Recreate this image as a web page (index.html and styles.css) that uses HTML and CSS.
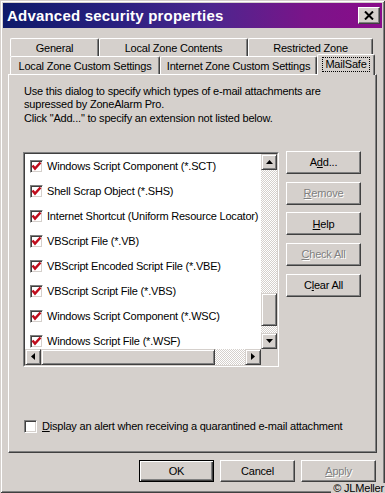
FILE: index.html
```html
<!DOCTYPE html>
<html>
<head>
<meta charset="utf-8">
<title>Advanced security properties</title>
<link rel="stylesheet" href="styles.css">
</head>
<body>
<div class="window">
  <div class="titlebar">
    <span class="title">Advanced security properties</span>
    <div class="close">
      <svg width="10" height="9" viewBox="0 0 10 9"><path d="M1 0.5 L9 8.5 M9 0.5 L1 8.5" stroke="#000" stroke-width="2"/></svg>
    </div>
  </div>
  <div class="client">
    <div class="tabrow">
      <div class="tab w-general">General</div>
      <div class="tab w-lzc">Local Zone Contents</div>
      <div class="tab w-rz">Restricted Zone</div>
    </div>
    <div class="tabrow">
      <div class="tab w-lzcs">Local Zone Custom Settings</div>
      <div class="tab w-izcs">Internet Zone Custom Settings</div>
      <div class="tab sel"><span class="focus">MailSafe</span></div>
    </div>
    <div class="panel">
      <p class="desc">Use this dialog to specify which types of e-mail attachments are<br>supressed by ZoneAlarm Pro.<br>Click "Add..." to specify an extension not listed below.</p>
      <div class="listrow">
        <div class="listbox">
          <div class="listinner">
            <div class="items">
              <div class="item"><span class="cb checked"><svg width="11" height="11" viewBox="0 0 11 11"><path d="M1.5 4.5 L4 7.5 L9.5 1.5" fill="none" stroke="#c00c1c" stroke-width="2.5"/></svg></span>Windows Script Component (*.SCT)</div>
              <div class="item"><span class="cb checked"><svg width="11" height="11" viewBox="0 0 11 11"><path d="M1.5 4.5 L4 7.5 L9.5 1.5" fill="none" stroke="#c00c1c" stroke-width="2.5"/></svg></span>Shell Scrap Object (*.SHS)</div>
              <div class="item"><span class="cb checked"><svg width="11" height="11" viewBox="0 0 11 11"><path d="M1.5 4.5 L4 7.5 L9.5 1.5" fill="none" stroke="#c00c1c" stroke-width="2.5"/></svg></span>Internet Shortcut (Uniform Resource Locator)</div>
              <div class="item"><span class="cb checked"><svg width="11" height="11" viewBox="0 0 11 11"><path d="M1.5 4.5 L4 7.5 L9.5 1.5" fill="none" stroke="#c00c1c" stroke-width="2.5"/></svg></span>VBScript File (*.VB)</div>
              <div class="item"><span class="cb checked"><svg width="11" height="11" viewBox="0 0 11 11"><path d="M1.5 4.5 L4 7.5 L9.5 1.5" fill="none" stroke="#c00c1c" stroke-width="2.5"/></svg></span>VBScript Encoded Script File (*.VBE)</div>
              <div class="item"><span class="cb checked"><svg width="11" height="11" viewBox="0 0 11 11"><path d="M1.5 4.5 L4 7.5 L9.5 1.5" fill="none" stroke="#c00c1c" stroke-width="2.5"/></svg></span>VBScript Script File (*.VBS)</div>
              <div class="item"><span class="cb checked"><svg width="11" height="11" viewBox="0 0 11 11"><path d="M1.5 4.5 L4 7.5 L9.5 1.5" fill="none" stroke="#c00c1c" stroke-width="2.5"/></svg></span>Windows Script Component (*.WSC)</div>
              <div class="item"><span class="cb checked"><svg width="11" height="11" viewBox="0 0 11 11"><path d="M1.5 4.5 L4 7.5 L9.5 1.5" fill="none" stroke="#c00c1c" stroke-width="2.5"/></svg></span>Windows Script File (*.WSF)</div>
            </div>
            <div class="vscroll">
              <div class="sbtn"><svg width="7" height="4" viewBox="0 0 7 4"><path d="M3.5 0 L7 4 L0 4 Z" fill="#000"/></svg></div>
              <div class="vtrack"><div class="vthumb"></div></div>
              <div class="sbtn"><svg width="7" height="4" viewBox="0 0 7 4"><path d="M0 0 L7 0 L3.5 4 Z" fill="#000"/></svg></div>
            </div>
            <div class="hscroll">
              <div class="sbtn"><svg width="4" height="7" viewBox="0 0 4 7"><path d="M4 0 L4 7 L0 3.5 Z" fill="#000"/></svg></div>
              <div class="htrack"><div class="hthumb"></div></div>
              <div class="sbtn"><svg width="4" height="7" viewBox="0 0 4 7"><path d="M0 0 L4 3.5 L0 7 Z" fill="#000"/></svg></div>
            </div>
            <div class="corner"></div>
          </div>
        </div>
        <div class="btns">
          <div class="btn">A<u>d</u>d...</div>
          <div class="btn disabled"><u>R</u>emove</div>
          <div class="btn"><u>H</u>elp</div>
          <div class="btn disabled"><u>C</u>heck All</div>
          <div class="btn">C<u>l</u>ear All</div>
        </div>
      </div>
      <div class="alert">
        <span class="cb"></span>
        <span><u>D</u>isplay an alert when receiving a quarantined e-mail attachment</span>
      </div>
    </div>
    <div class="footer">
      <div class="btn default">OK</div>
      <div class="btn">Cancel</div>
      <div class="btn disabled"><u>A</u>pply</div>
    </div>
  </div>
  <div class="credit">© JLMeller</div>
</div>
</body>
</html>
```

FILE: styles.css
```css
* { box-sizing: border-box; }
html, body { margin: 0; padding: 0; background: #d5d0cc; }
body {
  font-family: "Liberation Sans", Arial, sans-serif;
  font-size: 11px;
  letter-spacing: -0.2px;
  color: #000;
}
.window {
  position: relative;
  width: 385px;
  height: 493px;
  padding: 3px;
  background: #d5d0cc;
  box-shadow: inset 1px 1px #d5d0cc, inset -1px -1px #404040, inset 2px 2px #fff, inset -2px -2px #808080;
}
.titlebar {
  height: 25px;
  display: flex;
  align-items: center;
  justify-content: space-between;
  padding: 0 2px 0 4px;
  background: linear-gradient(to right, #0e1a6a 0%, #2a2080 30%, #4c268e 55%, #7a1489 80%, #8a0c8a 100%);
}
.title {
  color: #fff;
  font-weight: bold;
  font-size: 15px;
  letter-spacing: 0.2px;
}
.close {
  width: 22px;
  height: 17px;
  background: #d5d0cc;
  display: flex;
  align-items: center;
  justify-content: center;
  border: 1px solid;
  border-color: #fff #404040 #404040 #fff;
  box-shadow: inset -1px -1px #808080;
}
.client { padding: 10px 5px 0 5px; }
.tabrow {
  display: flex;
  align-items: flex-start;
  padding-left: 2px;
}
.tab {
  height: 18px;
  display: flex;
  align-items: center;
  justify-content: center;
  border-top: 1px solid #fff;
  border-left: 1px solid #fff;
  border-right: 1px solid #404040;
  border-radius: 2px 2px 0 0;
  box-shadow: inset -1px 0 #808080;
  white-space: nowrap;
}
.w-general { width: 89px; }
.w-lzc { width: 149px; }
.w-rz { width: 125px; }
.w-lzcs { width: 150px; }
.w-izcs { width: 157px; }
.tab.sel {
  width: 58px;
  height: 21px;
  margin-top: -2px;
  margin-bottom: -1px;
  background: #d5d0cc;
  position: relative;
  z-index: 1;
  padding-bottom: 1px;
}
.focus {
  outline: 1px dotted #000;
  outline-offset: 0;
  padding: 0 2px;
  line-height: 13px;
}
.panel {
  height: 379px;
  border: 1px solid;
  border-color: #fff #404040 #404040 #fff;
  box-shadow: inset -1px -1px #808080;
  padding: 10px 0 0 14px;
}
.desc {
  margin: 0;
  padding-left: 1px;
  line-height: 13.3px;
}
.listrow {
  display: flex;
  align-items: flex-start;
  margin-top: 27px;
}
.listbox {
  width: 256px;
  height: 215px;
  border: 1px solid;
  border-color: #808080 #fff #fff #808080;
}
.listinner {
  height: 100%;
  border: 1px solid;
  border-color: #404040 #d5d0cc #d5d0cc #404040;
  background: #fff;
  display: grid;
  grid-template-columns: 1fr 16px;
  grid-template-rows: 1fr 16px;
}
.items { overflow: hidden; }
.item {
  height: 25px;
  display: flex;
  align-items: center;
  padding-left: 5px;
  white-space: nowrap;
}
.cb {
  flex: none;
  width: 13px;
  height: 13px;
  margin-right: 4px;
  background: #fff;
  border: 1px solid;
  border-color: #808080 #fff #fff #808080;
  box-shadow: inset 1px 1px #404040, inset -1px -1px #d5d0cc;
  display: flex;
  align-items: center;
  justify-content: center;
}
.sbtn {
  flex: none;
  width: 16px;
  height: 16px;
  background: #d5d0cc;
  border: 1px solid;
  border-color: #d5d0cc #404040 #404040 #d5d0cc;
  box-shadow: inset 1px 1px #fff, inset -1px -1px #808080;
  display: flex;
  align-items: center;
  justify-content: center;
}
.vscroll, .hscroll { display: flex; }
.vscroll { flex-direction: column; }
.vtrack, .htrack {
  flex: 1;
  background: repeating-conic-gradient(#fff 0 25%, #d5d0cc 0 50%) 0 0 / 2px 2px;
}
.vthumb, .hthumb {
  background: #d5d0cc;
  border: 1px solid;
  border-color: #d5d0cc #404040 #404040 #d5d0cc;
  box-shadow: inset 1px 1px #fff, inset -1px -1px #808080;
}
.vthumb { height: 33px; margin-top: 123px; }
.htrack { display: flex; }
.hthumb { width: 174px; height: 16px; }
.corner { background: #d5d0cc; }
.btns {
  display: flex;
  flex-direction: column;
  gap: 7.7px;
  margin-left: 7px;
  margin-top: -1px;
}
.btn {
  width: 75px;
  height: 23px;
  display: flex;
  align-items: center;
  justify-content: center;
  background: #d5d0cc;
  border: 1px solid;
  border-color: #fff #404040 #404040 #fff;
  box-shadow: inset -1px -1px #808080;
  white-space: nowrap;
}
.btn.disabled {
  color: #808080;
  text-shadow: 1px 1px #fff;
}
.btn.default {
  border-color: #000;
  box-shadow: inset 1px 1px #fff, inset -1px -1px #404040, inset -2px -2px #808080;
}
.alert {
  display: flex;
  align-items: center;
  margin-top: 53px;
  margin-left: 1px;
}
.alert .cb { margin-right: 5px; }
.footer {
  display: flex;
  justify-content: flex-end;
  gap: 6px;
  padding: 7px 1px 0 0;
}
.footer .btn { height: 22px; }
.credit {
  position: absolute;
  right: 0;
  bottom: 0;
  font-size: 11px;
  line-height: 10px;
  padding: 0 1px 0 2px;
  background: #d5d0cc;
  color: #000;
}
```
